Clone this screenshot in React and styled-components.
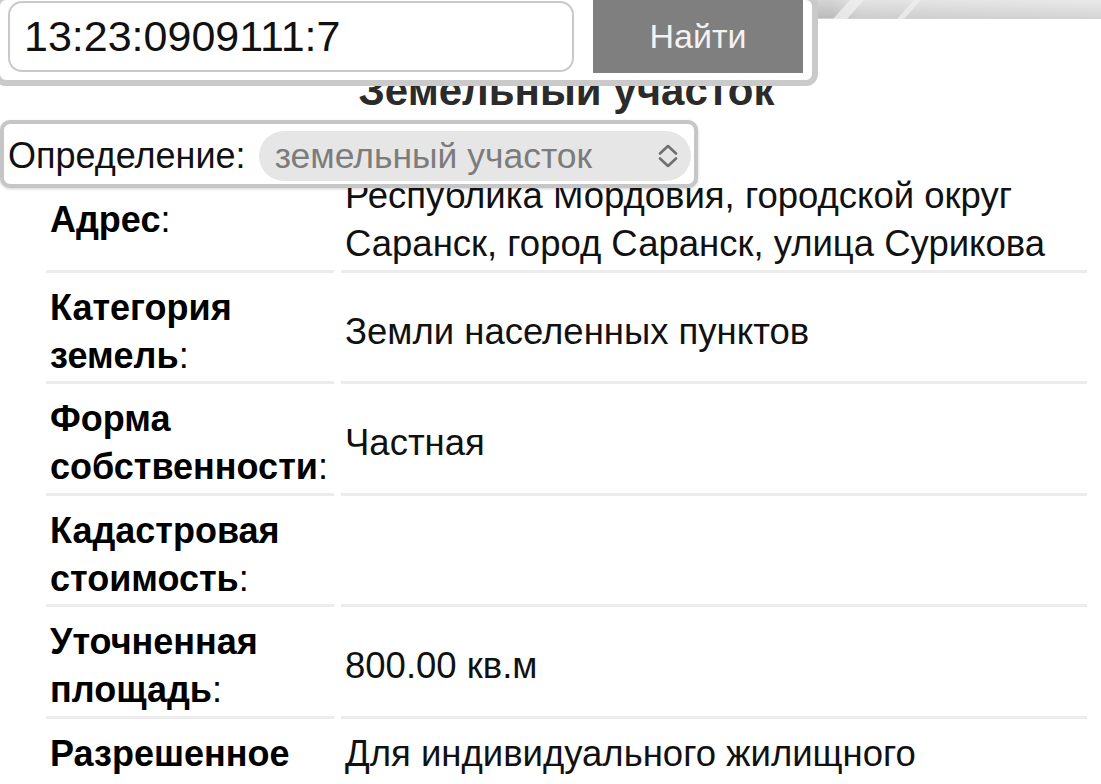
import React from 'react';
import styled, { createGlobalStyle } from 'styled-components';

const GlobalStyle = createGlobalStyle`
  html, body {
    margin: 0;
    padding: 0;
    background: #fff;
  }
  body {
    font-family: "Liberation Sans", Arial, Helvetica, sans-serif;
    color: #000;
    overflow: hidden;
  }
  * {
    box-sizing: border-box;
  }
`;

const Screen = styled.div`
  position: relative;
  width: 1101px;
  height: 784px;
  overflow: hidden;
  background: #fff;
`;

const MapStrip = styled.div`
  height: 19px;
  background:
    linear-gradient(180deg, rgba(255, 255, 255, 0.25), rgba(0, 0, 0, 0.06)),
    linear-gradient(90deg, #bfbfbf 0, #c6c6c6 830px, #dadada 860px, #e2e2e2 1101px);
  border-bottom: 1px solid #d2d2d2;

  svg {
    display: block;
  }
`;

const Content = styled.main`
  margin: 0 14px 0 46px;
`;

const Title = styled.h1`
  margin: 48px 0 0;
  text-align: center;
  font-size: 42px;
  line-height: 48px;
  font-weight: 700;
  color: #2b2b2b;
`;

const InfoTable = styled.div`
  display: grid;
  grid-template-columns: 288px 1fr;
  column-gap: 7px;
  margin-top: 46px;
`;

const Cell = styled.div`
  display: flex;
  align-items: center;
  min-height: 111.5px;
  padding: 11px 0 1.5px 4px;
  border-bottom: 3px solid #ececec;
  font-size: ${(p) => (p.$label ? '36px' : '36.5px')};
  line-height: 48px;
  font-weight: ${(p) => (p.$label ? 700 : 400)};
  color: ${(p) => (p.$label ? '#000' : '#111')};
`;

const Colon = styled.span`
  font-weight: 400;
`;

const SearchPanel = styled.form`
  position: absolute;
  top: -6px;
  left: -6px;
  display: flex;
  align-items: flex-start;
  gap: 19px;
  padding: 0 9px 7px 8px;
  background: #fff;
  border: 6px solid #cacaca;
  border-radius: 12px;
`;

const SearchInput = styled.input`
  width: 566px;
  height: 71px;
  margin-top: 1px;
  padding: 0 14px;
  border: 2px solid #c9c9c9;
  border-radius: 14px;
  background: #fff;
  font-family: "Liberation Sans", Arial, Helvetica, sans-serif;
  font-size: 43px;
  color: #111;
  outline: none;
`;

const FindButton = styled.button`
  width: 210px;
  height: 73px;
  border: none;
  background: #7f7f7f;
  color: #f2f2f2;
  font-family: "Liberation Sans", Arial, Helvetica, sans-serif;
  font-size: 34px;
  padding: 0;
`;

const DefinitionPanel = styled.div`
  position: absolute;
  top: 120px;
  left: 0;
  display: flex;
  align-items: center;
  gap: 13px;
  padding: 7px 3px 3px 4px;
  background: #fff;
  border: 4px solid #c6c6c6;
  border-radius: 10px;
  box-shadow: 0 1px 3px rgba(0, 0, 0, 0.18);
`;

const DefinitionLabel = styled.span`
  font-size: 36px;
  line-height: 48px;
  color: #111;
`;

const SelectBox = styled.div`
  display: flex;
  align-items: center;
  justify-content: space-between;
  width: 432px;
  height: 50px;
  padding: 0 10px 0 16px;
  border-radius: 25px;
  background: #e6e6e6;
  font-size: 35.5px;
  color: #7c7c7c;
`;

function Chevrons() {
  return (
    <svg width="26" height="28" viewBox="0 0 26 28" fill="none">
      <path d="M5 11.5 13 4l8 7.5" stroke="#6f6f6f" strokeWidth="2.6" strokeLinecap="round" strokeLinejoin="round" />
      <path d="M5 16.5 13 24l8-7.5" stroke="#6f6f6f" strokeWidth="2.6" strokeLinecap="round" strokeLinejoin="round" />
    </svg>
  );
}

function StripArt() {
  return (
    <svg width="1101" height="19" viewBox="0 0 1101 19">
      <polygon points="850,0 864,0 847,19 833,19" fill="#efefef" opacity="0.8" />
      <polygon points="914,0 921,0 904,19 897,19" fill="#efefef" opacity="0.75" />
    </svg>
  );
}

const rows = [
  { label: ['Адрес'], value: 'Республика Мордовия, городской округ Саранск, город Саранск, улица Сурикова' },
  { label: ['Категория', 'земель'], value: 'Земли населенных пунктов' },
  { label: ['Форма', 'собственности'], value: 'Частная' },
  { label: ['Кадастровая', 'стоимость'], value: '' },
  { label: ['Уточненная', 'площадь'], value: '800.00 кв.м' },
  { label: ['Разрешенное', 'использование'], value: 'Для индивидуального жилищного строительства' },
];

export default function App() {
  return (
    <Screen>
      <GlobalStyle />
      <MapStrip>
        <StripArt />
      </MapStrip>

      <Content>
        <Title>Земельный участок</Title>
        <InfoTable>
          {rows.map((row) => (
            <React.Fragment key={row.label.join(' ')}>
              <Cell $label>
                <span>
                  {row.label.map((part, i) => (
                    <React.Fragment key={part}>
                      {i > 0 && <br />}
                      {part}
                    </React.Fragment>
                  ))}
                  <Colon>:</Colon>
                </span>
              </Cell>
              <Cell>{row.value}</Cell>
            </React.Fragment>
          ))}
        </InfoTable>
      </Content>

      <SearchPanel onSubmit={(e) => e.preventDefault()}>
        <SearchInput defaultValue="13:23:0909111:7" />
        <FindButton type="submit">Найти</FindButton>
      </SearchPanel>

      <DefinitionPanel>
        <DefinitionLabel>Определение:</DefinitionLabel>
        <SelectBox>
          <span>земельный участок</span>
          <Chevrons />
        </SelectBox>
      </DefinitionPanel>
    </Screen>
  );
}
